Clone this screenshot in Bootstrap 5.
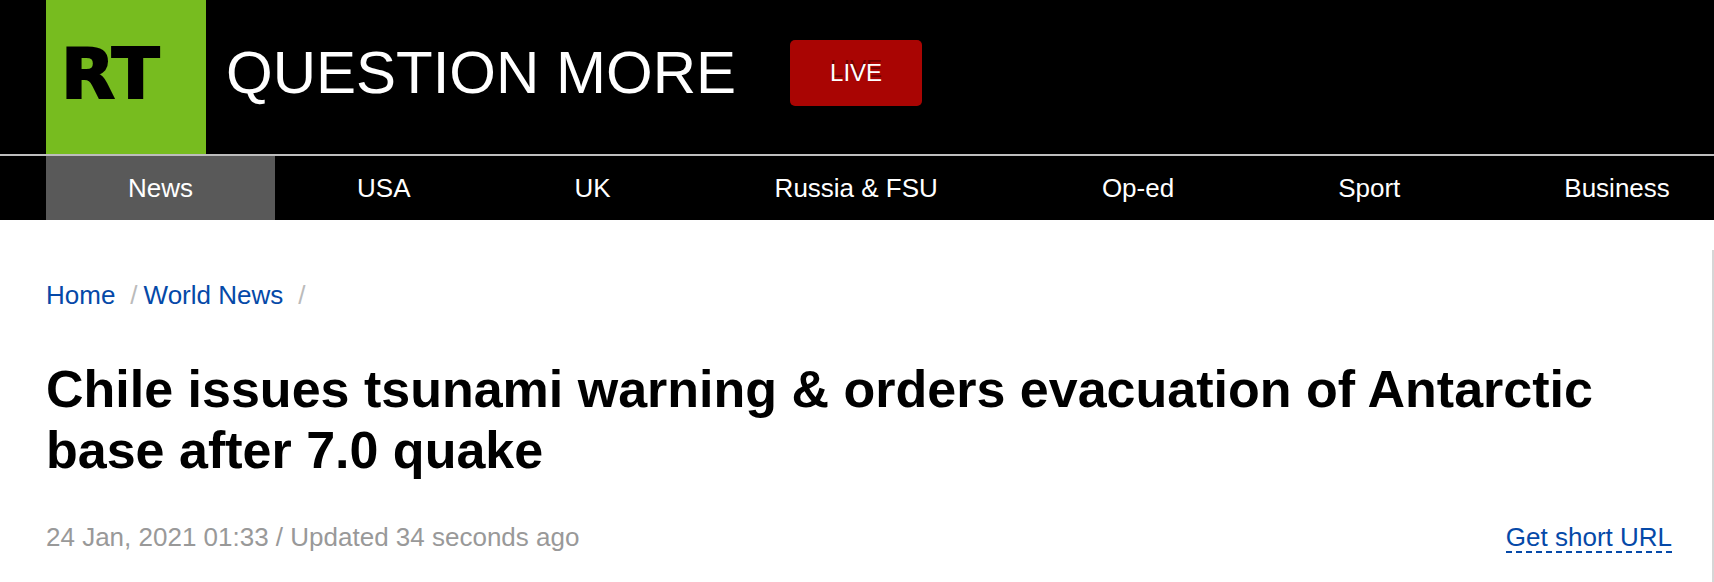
<!DOCTYPE html>
<html lang="en">
<head>
<meta charset="utf-8">
<meta name="viewport" content="width=device-width, initial-scale=1">
<title>Chile issues tsunami warning &amp; orders evacuation of Antarctic base after 7.0 quake</title>
<link href="https://cdn.jsdelivr.net/npm/bootstrap@5.3.0/dist/css/bootstrap.min.css" rel="stylesheet">
<style>
  body { font-family: "Liberation Sans", Arial, sans-serif; font-size: 26px; color: #000; overflow-x: hidden; }
  .masthead { background: #000; padding-left: 46px; border-bottom: 2px solid #bdbdbd; }
  .brand-logo { width: 160px; height: 154px; background: #77bc1f; }
  .brand-logo text { font-family: "DejaVu Sans", sans-serif; font-weight: 700; font-size: 70px; fill: #000; stroke: #000; stroke-width: 2px; }
  .tagline { font-size: 60px; line-height: 68px; margin-left: 20px; }
  .btn-live { background: #a90503; color: #fff; font-size: 24px; line-height: 34px; padding: 16px 40px; border: 0; border-radius: 5px; margin-left: 54px; text-shadow: 0 -4px 0 rgba(0, 0, 0, .35); }
  .btn-live:hover { background: #c00805; color: #fff; }
  .sections { background: #000; padding-left: 46px; }
  .sections .nav-link { color: #fff; line-height: 64px; padding: 0 82px; white-space: nowrap; }
  .sections .nav-link:hover, .sections .nav-link.active { background: #595959; }
  .story { margin-top: 30px; padding: 25px 40px 29px 46px; border-right: 2px solid #d6d6d6; }
  .story a { color: #0549a8; }
  .trail { line-height: 40px; }
  .trail li::after { content: "/"; color: #bbb; margin: 0 6px 0 15px; }
  .headline { font-size: 52px; line-height: 61px; font-weight: 700; margin: 44px 0 40px; }
  .dateline { color: #999; line-height: 32px; }
  .story .short-url { line-height: 28px; border-bottom: 2px dashed #0549a8; }
</style>
</head>
<body>
<div class="d-flex flex-column min-vh-100">
  <header>
    <div class="masthead d-flex align-items-center">
      <a href="#" class="d-block flex-shrink-0" aria-label="RT home">
        <svg class="brand-logo d-block" viewBox="0 0 160 154" role="img"><text x="15" y="98">RT</text></svg>
      </a>
      <div class="d-flex align-items-center pb-2">
        <span class="tagline text-white text-nowrap">QUESTION MORE</span>
        <button type="button" class="btn btn-live">LIVE</button>
      </div>
    </div>
    <nav class="sections overflow-hidden" aria-label="Sections">
      <ul class="nav flex-nowrap">
        <li class="nav-item"><a class="nav-link active" aria-current="page" href="#">News</a></li>
        <li class="nav-item"><a class="nav-link" href="#">USA</a></li>
        <li class="nav-item"><a class="nav-link" href="#">UK</a></li>
        <li class="nav-item"><a class="nav-link" href="#">Russia &amp; FSU</a></li>
        <li class="nav-item"><a class="nav-link" href="#">Op-ed</a></li>
        <li class="nav-item"><a class="nav-link" href="#">Sport</a></li>
        <li class="nav-item"><a class="nav-link" href="#">Business</a></li>
      </ul>
    </nav>
  </header>
  <main class="story flex-grow-1">
    <nav aria-label="Breadcrumb">
      <ol class="trail list-unstyled d-flex mb-0">
        <li><a class="text-decoration-none" href="#">Home</a></li>
        <li><a class="text-decoration-none" href="#">World News</a></li>
      </ol>
    </nav>
    <h1 class="headline">Chile issues tsunami warning &amp; orders evacuation of Antarctic base after 7.0 quake</h1>
    <div class="dateline d-flex justify-content-between align-items-baseline">
      <span>24 Jan, 2021 01:33 / Updated 34 seconds ago</span>
      <a class="short-url text-decoration-none text-nowrap" href="#">Get short URL</a>
    </div>
  </main>
</div>
<script src="https://cdn.jsdelivr.net/npm/bootstrap@5.3.0/dist/js/bootstrap.bundle.min.js"></script>
</body>
</html>
